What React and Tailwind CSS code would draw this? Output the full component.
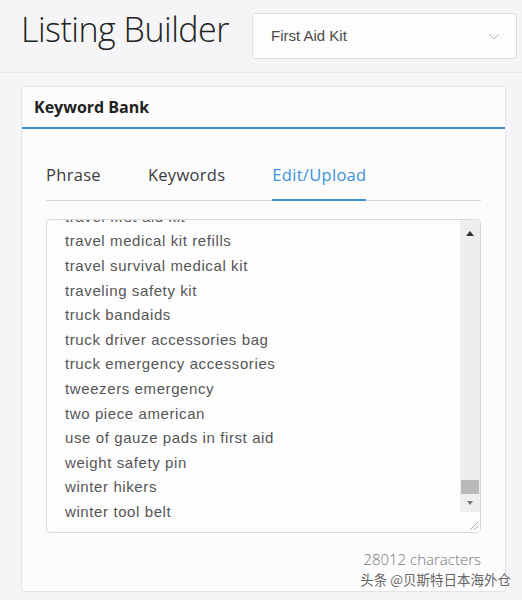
import React from 'react';

const keywords = [
  'travel first aid kit',
  'travel medical kit refills',
  'travel survival medical kit',
  'traveling safety kit',
  'truck bandaids',
  'truck driver accessories bag',
  'truck emergency accessories',
  'tweezers emergency',
  'two piece american',
  'use of gauze pads in first aid',
  'weight safety pin',
  'winter hikers',
  'winter tool belt',
];

const tabs = ['Phrase', 'Keywords', 'Edit/Upload'];

const App = () => {
  return (
    <div className="min-h-[600px] bg-[#f5f5f7] font-['Open_Sans','Noto_Sans',sans-serif] text-[#333]">
      <div className="flex h-[73px] items-start border-b border-[#e8e8eb] pl-[21px] pr-[5px] pt-[13px]">
        <h1 className="-mt-[4px] text-[34px] font-light leading-[40px] tracking-[-0.5px] text-[#222]">Listing Builder</h1>
        <div className="ml-auto flex h-[46px] w-[265px] items-center rounded-[3px] border border-[#dedee2] bg-[#fdfdfe] pl-[18px] pr-[16px]">
          <span className="font-['Liberation_Sans',sans-serif] text-[15px] text-[#4a4a4a]">First Aid Kit</span>
          <svg className="ml-auto" width="12" height="7" viewBox="0 0 12 7" fill="none">
            <path d="M1 1l5 5 5-5" stroke="#b5b5ba" strokeWidth="1" />
          </svg>
        </div>
      </div>

      <div className="pl-[21px] pr-[16px] pt-[13px]">
        <div className="rounded-[3px] border border-[#e4e4e8] bg-[#fcfcfd]">
          <div className="flex h-[42px] items-center border-b-2 border-[#3a8fd2] px-[12px]">
            <h2 className="text-[16px] font-bold text-[#222]">Keyword Bank</h2>
          </div>

          <div className="px-[24px] pt-[34px] pb-[2px]">
            <div className="flex gap-[47px] border-b border-[#d7d7db]">
              {tabs.map((t, i) => (
                <div
                  key={t}
                  className={
                    i === 2
                      ? '-mb-px border-b-2 border-[#3a93d8] pb-[10px] text-[16.5px] tracking-[0.3px] text-[#3a93d8]'
                      : 'pb-[12px] text-[16.5px] tracking-[0.3px] text-[#3a3a3a]'
                  }
                >
                  {t}
                </div>
              ))}
            </div>

            <div className="mt-[18px] flex h-[314px] overflow-hidden rounded-[4px] border border-[#d9d9dd] bg-[#fdfdfe]">
              <div className="flex-1 overflow-hidden pl-[18px]">
                <div className="-mt-[15px] font-['Liberation_Sans',sans-serif] text-[15px] leading-[24.6px] tracking-[0.6px] text-[#555]">
                  {keywords.map((k) => (
                    <div key={k}>{k}</div>
                  ))}
                </div>
              </div>
              <div className="flex w-[20px] flex-col bg-[#eeeef0]">
                <div className="flex h-[20px] items-end justify-center pb-[4px]">
                  <svg width="8" height="5" viewBox="0 0 8 5">
                    <path d="M0 5L4 0l4 5z" fill="#333" />
                  </svg>
                </div>
                <div className="flex-1" />
                <div className="mx-[1px] h-[14px] bg-[#b9b9bc]" />
                <div className="flex h-[18px] items-center justify-center">
                  <svg width="6" height="4" viewBox="0 0 6 4">
                    <path d="M0 0L3 4l3-4z" fill="#777" />
                  </svg>
                </div>
                <div className="flex h-[20px] items-end justify-end bg-[#fdfdfe] pb-[2px] pr-[2px]">
                  <svg width="9" height="9" viewBox="0 0 9 9">
                    <path d="M9 1L1 9M9 5L5 9" stroke="#aaa" strokeWidth="1" />
                  </svg>
                </div>
              </div>
            </div>

            <div className="mt-[16px] text-right text-[15px] font-light leading-[20px] text-[#777]">28012 characters</div>
            <div className="-mr-[30px] text-right font-['Noto_Sans_CJK_SC',sans-serif] text-[13.5px] leading-[20px] text-[#666]">
              头条 @贝斯特日本海外仓
            </div>
          </div>
        </div>
      </div>
    </div>
  );
};

export default App;
